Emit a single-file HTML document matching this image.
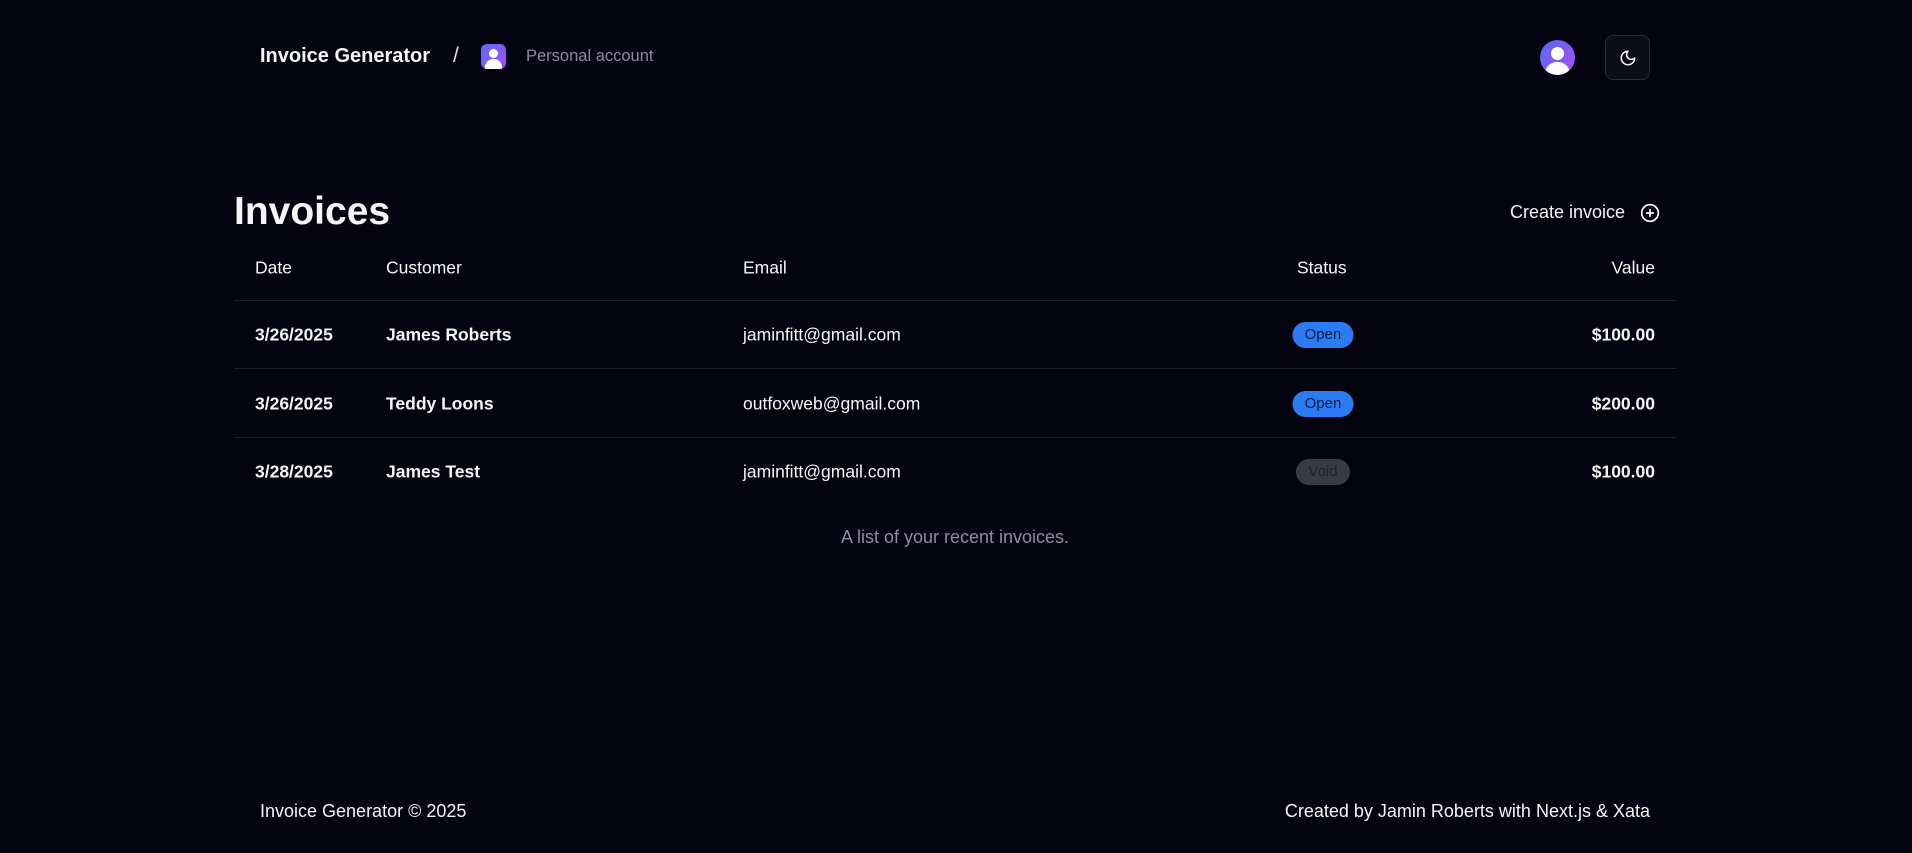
<!DOCTYPE html>
<html><head><meta charset="utf-8"><style>
*{margin:0;padding:0;box-sizing:border-box}
body{width:1912px;height:853px;background:#03040f;color:#f5f5f7;font-family:"Liberation Sans",sans-serif;position:relative;overflow:hidden}
.a{position:absolute;white-space:nowrap}
.row{position:absolute;left:234px;width:1442px;height:1px;background:#1c1f2c}
.td{position:absolute;font-size:17.5px;transform:translateY(-50%)}
.b{font-weight:bold}
.badge{position:absolute;width:61px;height:26px;border-radius:13px;font-size:15px;text-align:center;line-height:26px;transform:translate(-50%,-50%)}
</style></head><body>
<div class="a b" style="left:260px;top:45px;font-size:20px">Invoice Generator</div>
<div class="a" style="left:453px;top:44px;font-size:21px;color:#e0e0e6">/</div>
<div class="a" style="left:481px;top:44px;width:25px;height:25px;border-radius:6px;background:linear-gradient(135deg,#5b6cf5,#a24ef0);overflow:hidden">
<div style="position:absolute;left:8px;top:5px;width:9px;height:9px;border-radius:50%;background:#fff"></div>
<div style="position:absolute;left:4px;top:15px;width:17px;height:14px;border-radius:8px 8px 0 0;background:#fff"></div></div>
<div class="a" style="left:526px;top:47px;font-size:16.5px;color:#8a8ca0">Personal account</div>

<div class="a" style="left:1540px;top:40px;width:35px;height:35px;border-radius:50%;background:linear-gradient(135deg,#4f6cf7,#b04ef0);overflow:hidden">
<div style="position:absolute;left:11px;top:7px;width:13px;height:13px;border-radius:50%;background:#fff"></div>
<div style="position:absolute;left:5px;top:22px;width:25px;height:18px;border-radius:12px 12px 0 0;background:#fff"></div></div>
<div class="a" style="left:1605px;top:35px;width:45px;height:45px;border-radius:8px;border:1px solid #2a2d3a;background:#0b0d18">
<svg style="position:absolute;left:13px;top:13px" width="18" height="18" viewBox="0 0 24 24" fill="none" stroke="#fff" stroke-width="2" stroke-linecap="round" stroke-linejoin="round"><path d="M12 3a6 6 0 0 0 9 9 9 9 0 1 1-9-9Z"/></svg></div>

<div class="a b" style="left:234px;top:190px;font-size:39px">Invoices</div>
<div class="a" style="left:1510px;top:202px;font-size:18px">Create invoice</div>
<svg class="a" style="left:1640px;top:203px" width="20" height="20" viewBox="0 0 24 24" fill="none" stroke="#fff" stroke-width="2" stroke-linecap="round"><circle cx="12" cy="12" r="10"/><path d="M8 12h8M12 8v8"/></svg>

<div class="td" style="left:255px;top:268px">Date</div>
<div class="td" style="left:386px;top:268px">Customer</div>
<div class="td" style="left:743px;top:268px">Email</div>
<div class="td" style="left:1297px;top:268px">Status</div>
<div class="td" style="right:257px;top:268px">Value</div>
<div class="row" style="top:300px"></div>
<div class="row" style="top:368px"></div>
<div class="row" style="top:437px"></div>

<div class="td b" style="left:255px;top:335px">3/26/2025</div>
<div class="td b" style="left:386px;top:335px">James Roberts</div>
<div class="td" style="left:743px;top:335px">jaminfitt@gmail.com</div>
<div class="badge" style="left:1323px;top:335px;background:#2b7cf4;color:#0b1d45">Open</div>
<div class="td b" style="right:257px;top:335px">$100.00</div>

<div class="td b" style="left:255px;top:404px">3/26/2025</div>
<div class="td b" style="left:386px;top:404px">Teddy Loons</div>
<div class="td" style="left:743px;top:404px">outfoxweb@gmail.com</div>
<div class="badge" style="left:1323px;top:404px;background:#2b7cf4;color:#0b1d45">Open</div>
<div class="td b" style="right:257px;top:404px">$200.00</div>

<div class="td b" style="left:255px;top:472px">3/28/2025</div>
<div class="td b" style="left:386px;top:472px">James Test</div>
<div class="td" style="left:743px;top:472px">jaminfitt@gmail.com</div>
<div class="badge" style="left:1323px;top:472px;width:54px;background:#383a44;color:#20222b">Void</div>
<div class="td b" style="right:257px;top:472px">$100.00</div>

<div class="a" style="left:0;width:1910px;text-align:center;top:527px;font-size:18px;color:#8b8fa3">A list of your recent invoices.</div>

<div class="a" style="left:260px;top:801px;font-size:18px">Invoice Generator © 2025</div>
<div class="a" style="right:262px;top:801px;font-size:18px">Created by Jamin Roberts with Next.js &amp; Xata</div>
</body></html>
